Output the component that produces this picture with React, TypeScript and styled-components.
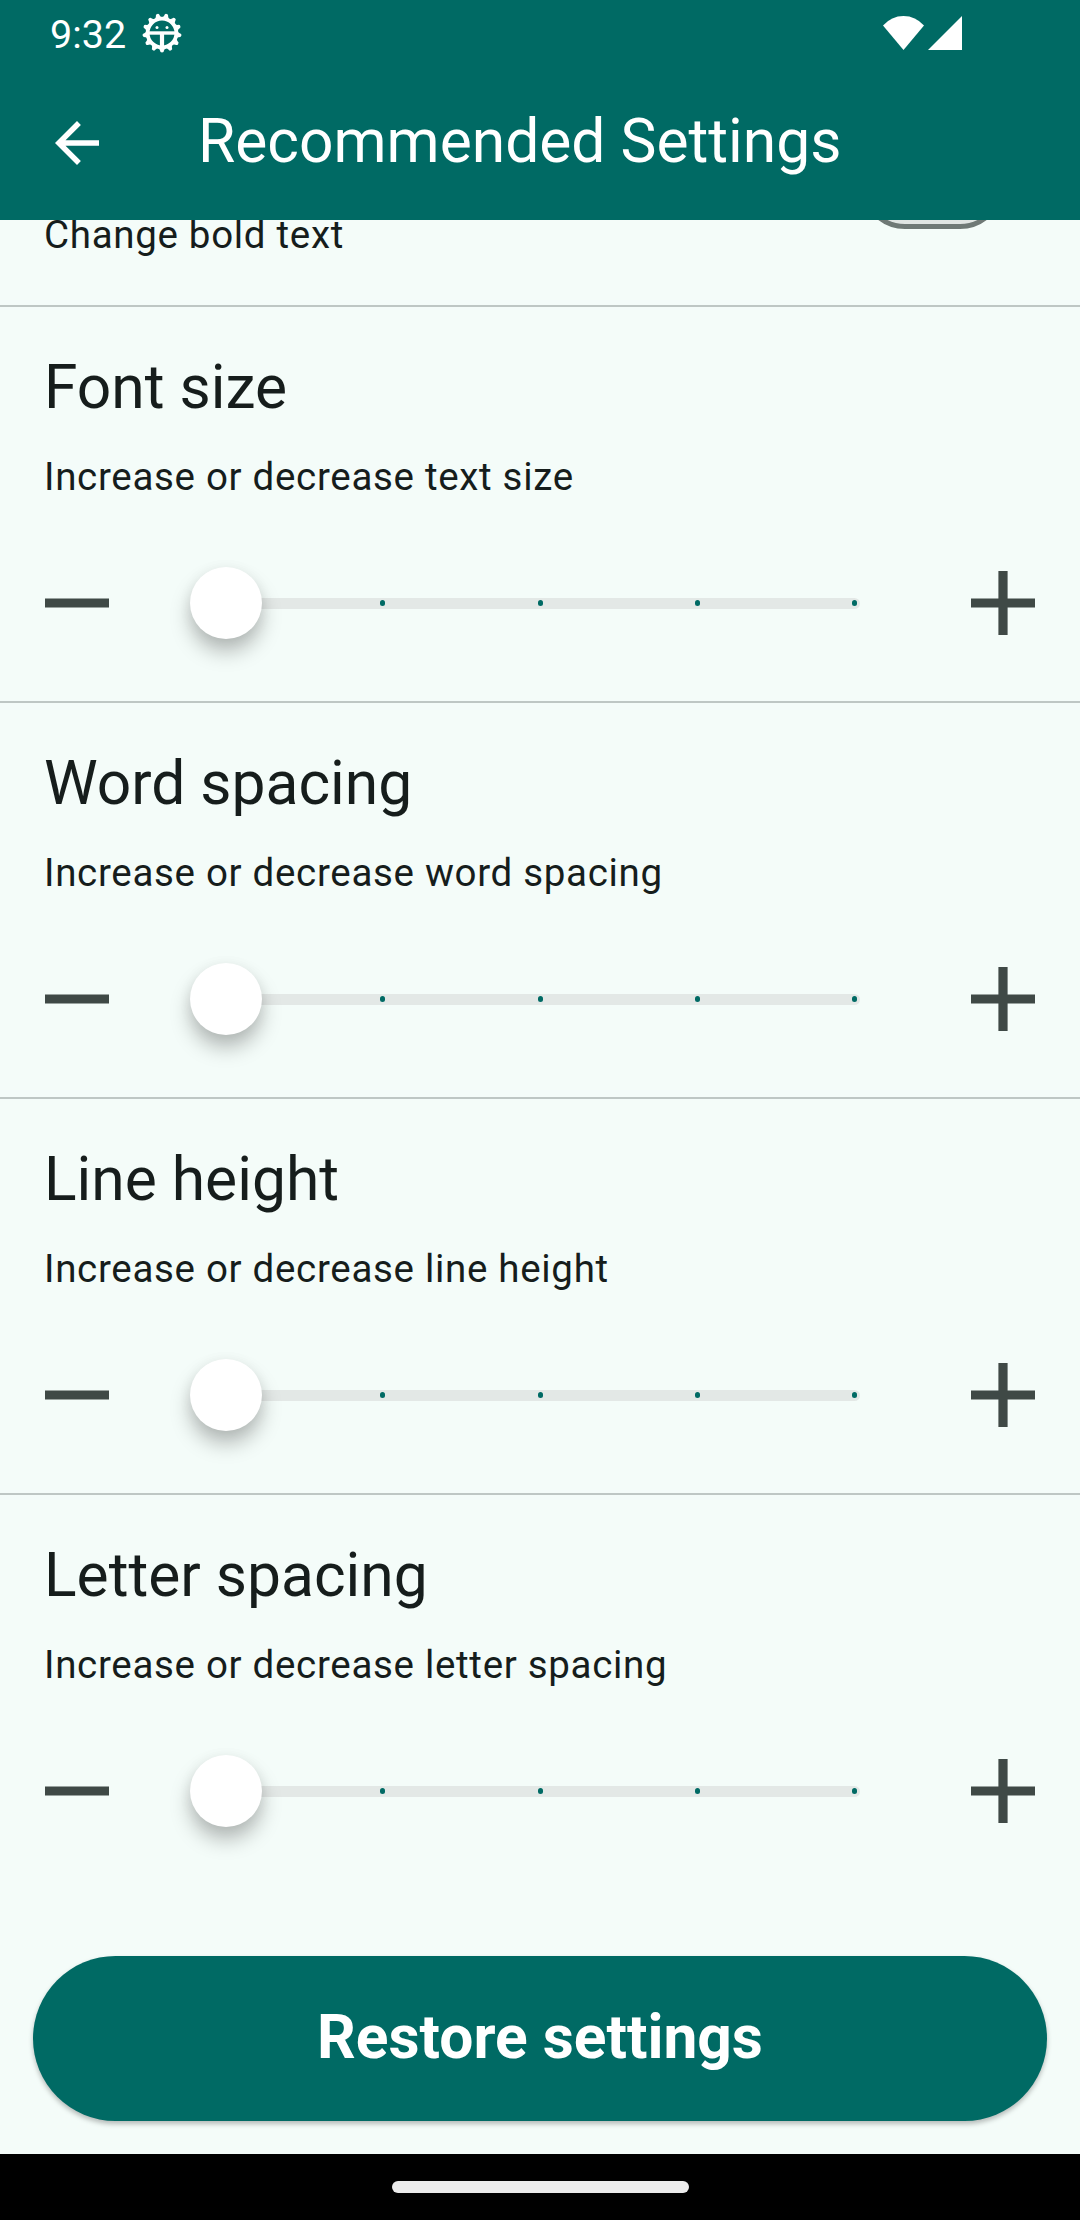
import React from 'react';
import styled, { createGlobalStyle } from 'styled-components';

const teal = '#006a64';
const surface = '#f4fcf9';
const ink = '#161d1c';
const iconInk = '#3f4946';

const GlobalStyle = createGlobalStyle`
  *, *::before, *::after { box-sizing: border-box; }
  body { margin: 0; background: ${surface}; }
`;

const Screen = styled.div`
  display: flex;
  flex-direction: column;
  width: 1080px;
  height: 2220px;
  overflow: hidden;
  background: ${surface};
  color: ${ink};
  font-family: Roboto, sans-serif;
`;

const Header = styled.header`
  flex: none;
  height: 220px;
  background: ${teal};
  color: #fff;
`;

const StatusBar = styled.div`
  display: flex;
  align-items: center;
  justify-content: space-between;
  height: 66px;
  padding: 0 118px 0 50px;
`;

const StatusGroup = styled.div<{ $gap: number }>`
  display: flex;
  align-items: center;
  gap: ${({ $gap }) => $gap}px;
`;

const Clock = styled.span`
  font-size: 39.5px;
  line-height: 48px;
  padding-top: 3px;
`;

const Toolbar = styled.div`
  display: flex;
  align-items: center;
  height: 154px;
  padding: 0 44px;
  gap: 88px;
`;

const BackButton = styled.button`
  display: flex;
  padding: 0;
  border: 0;
  background: none;
  color: inherit;
`;

const Title = styled.h1`
  margin: 0;
  padding-bottom: 2px;
  font-size: 60.5px;
  font-weight: 400;
  line-height: 72px;
  white-space: nowrap;
`;

const Content = styled.main`
  flex: 1;
  display: flex;
  flex-direction: column;
  justify-content: flex-end;
  min-height: 0;
  overflow: hidden;
`;

const BoldSection = styled.section`
  display: flex;
  align-items: flex-end;
  justify-content: space-between;
  height: 167px;
  padding: 0 76px 42px 44px;
  border-bottom: 2px solid #bec7c4;
  flex: none;
`;

const Switch = styled.span`
  width: 143px;
  height: 88px;
  margin-bottom: 34px;
  border: 5.5px solid #6f7976;
  border-radius: 44px;
  background: #e0e5e3;
`;

const Section = styled.section<{ $last?: boolean }>`
  flex: none;
  height: ${({ $last }) => ($last ? 416 : 396)}px;
  padding: 45px 44px 0;
  border-bottom: ${({ $last }) => ($last ? 'none' : '2px solid #bec7c4')};
`;

const SectionTitle = styled.h2`
  margin: 0;
  font-size: 60.5px;
  font-weight: 400;
  line-height: 72px;
`;

const Description = styled.p`
  margin: 0;
  font-size: 38.5px;
  line-height: 56px;
  letter-spacing: 0.6875px;
`;

const SectionText = styled.div`
  display: flex;
  flex-direction: column;
  gap: 25px;
`;

const SliderRow = styled.div`
  display: flex;
  align-items: center;
  height: 72px;
  margin-top: 62px;
  padding: 0 1px;
`;

const StepButton = styled.button`
  display: flex;
  padding: 0;
  border: 0;
  background: none;
`;

const Track = styled.div`
  display: flex;
  align-items: center;
  justify-content: space-between;
  width: 640px;
  height: 11px;
  margin: 0 111px;
  border-radius: 5.5px;
  background: linear-gradient(to right, transparent 20px, #e3e8e6 20px);
`;

const Tick = styled.span`
  width: 5px;
  height: 6px;
  border-radius: 2.5px;
  background: ${teal};
  &:last-child { margin-right: 3px; }
`;

const Thumb = styled.span`
  flex: none;
  width: 72px;
  height: 72px;
  margin-left: -30px;
  margin-right: -34px;
  border-radius: 50%;
  background: #fff;
  box-shadow: 0 13px 20px rgba(0, 0, 0, 0.25), 0 2px 14px rgba(0, 0, 0, 0.06);
`;

const Footer = styled.footer`
  flex: none;
  height: 243px;
  padding: 45px 33px 33px;
`;

const RestoreButton = styled.button`
  display: block;
  width: 100%;
  height: 165px;
  padding: 0 0 2px;
  border: 0;
  border-radius: 82.5px;
  background: ${teal};
  color: #fff;
  font-family: inherit;
  font-size: 60.5px;
  font-weight: 700;
  box-shadow: 0 3px 5px rgba(0, 0, 0, 0.26);
`;

const NavigationBar = styled.nav`
  flex: none;
  display: flex;
  justify-content: center;
  height: 66px;
  padding-top: 27px;
  background: #000;
`;

const HomeHandle = styled.span`
  width: 297px;
  height: 12px;
  border-radius: 6px;
  background: #ececec;
`;

const Icon = styled.svg`
  display: block;
  flex: none;
`;

const GearFace = () => {
  const teeth = Array.from({ length: 13 }, (_, i) => (i * 360) / 13);
  return (
    <Icon width="40" height="40" viewBox="-20 -20 40 40">
      <circle r="14.4" fill="none" stroke="#fff" strokeWidth="3.8" />
      {teeth.map((angle) => (
        <path key={angle} d="M-3.300 15L-2 17.600A2 2 0 0 0 2 17.600L3.300 15Z" fill="#fff" transform={`rotate(${angle})`} />
      ))}
      <path d="M-14 0H14" stroke="#fff" strokeWidth="3.4" />
      <path d="M0 0V15" stroke="#fff" strokeWidth="4.2" />
      <circle cx="-5" cy="-5.6" r="1.5" fill="#fff" />
      <circle cx="5" cy="-5.6" r="1.5" fill="#fff" />
    </Icon>
  );
};

const Wifi = () => (
  <Icon width="41" height="34" viewBox="0 0 41 34">
    <path d="M0 9.500Q8.500 0 20.500 0T41 9.500L20.500 34Z" fill="#fff" />
  </Icon>
);

const Signal = () => (
  <Icon width="34" height="34" viewBox="0 0 34 34">
    <path d="M34 0V34H0Z" fill="#fff" />
  </Icon>
);

const ArrowBack = () => (
  <Icon width="66" height="66" viewBox="0 0 24 24">
    <path d="M20 11H7.830l5.590-5.590L12 4l-8 8 8 8 1.410-1.410L7.830 13H20v-2z" fill="currentColor" />
  </Icon>
);

const Minus = () => (
  <Icon width="64" height="64" viewBox="0 0 64 64">
    <path d="M0 27.400H64V36.600H0Z" fill={iconInk} />
  </Icon>
);

const Plus = () => (
  <Icon width="64" height="64" viewBox="0 0 64 64">
    <path d="M0 27.400H27.400V0H36.600V27.400H64V36.600H36.600V64H27.400V36.600H0Z" fill={iconInk} />
  </Icon>
);

const settings = [
  { title: 'Font size', description: 'Increase or decrease text size' },
  { title: 'Word spacing', description: 'Increase or decrease word spacing' },
  { title: 'Line height', description: 'Increase or decrease line height' },
  { title: 'Letter spacing', description: 'Increase or decrease letter spacing' },
];

const SliderControl = ({ label }: { label: string }) => (
  <SliderRow>
    <StepButton aria-label={`Decrease ${label}`}><Minus /></StepButton>
    <Track>
      <Thumb />
      <Tick />
      <Tick />
      <Tick />
      <Tick />
    </Track>
    <StepButton aria-label={`Increase ${label}`}><Plus /></StepButton>
  </SliderRow>
);

export default function App() {
  return (
    <>
      <GlobalStyle />
      <Screen>
        <Header>
          <StatusBar>
            <StatusGroup $gap={16}>
              <Clock>9:32</Clock>
              <GearFace />
            </StatusGroup>
            <StatusGroup $gap={4}>
              <Wifi />
              <Signal />
            </StatusGroup>
          </StatusBar>
          <Toolbar>
            <BackButton aria-label="Back"><ArrowBack /></BackButton>
            <Title>Recommended Settings</Title>
          </Toolbar>
        </Header>
        <Content>
          <BoldSection>
            <Description>Change bold text</Description>
            <Switch />
          </BoldSection>
          {settings.map(({ title, description }, i) => (
            <Section key={title} $last={i === settings.length - 1}>
              <SectionText>
                <SectionTitle>{title}</SectionTitle>
                <Description>{description}</Description>
              </SectionText>
              <SliderControl label={title} />
            </Section>
          ))}
        </Content>
        <Footer>
          <RestoreButton>Restore settings</RestoreButton>
        </Footer>
        <NavigationBar><HomeHandle /></NavigationBar>
      </Screen>
    </>
  );
}
